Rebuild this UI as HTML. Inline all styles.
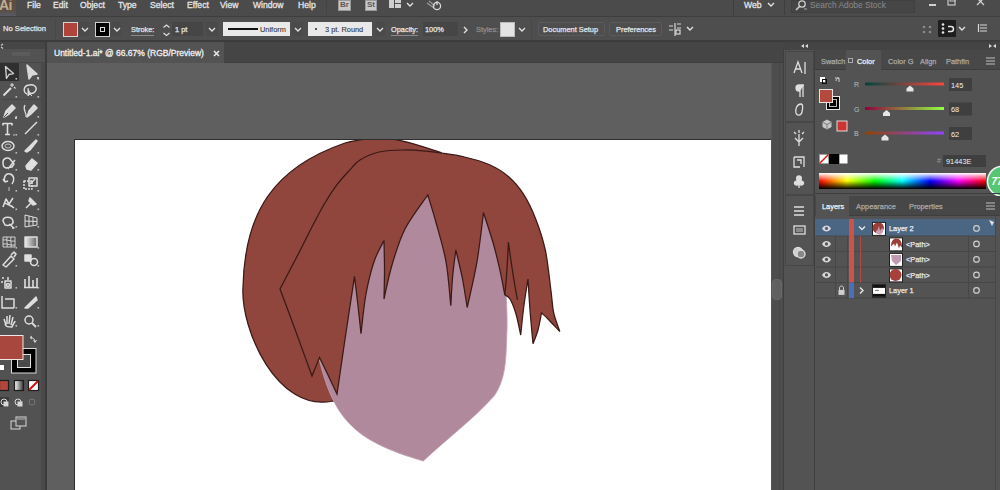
<!DOCTYPE html>
<html><head><meta charset="utf-8">
<style>
*{margin:0;padding:0;box-sizing:border-box}
html,body{width:1000px;height:490px;overflow:hidden;background:#535353;font-family:"Liberation Sans",sans-serif;color:#e6e6e6}
.a{position:absolute}
.m{position:absolute;top:0px;font-size:8.6px;line-height:10px;color:#e4e4e4;-webkit-text-stroke:0.3px #e4e4e4}
.t{position:absolute;font-size:7.4px;line-height:9px;color:#e6e6e6;white-space:nowrap;-webkit-text-stroke:0.25px currentColor}
.chev{position:absolute;width:10px;height:14px;background:#4a4a4a}
.box{position:absolute;background:#464646}
.ul{border-bottom:1px solid #8a8a8a}
svg{overflow:visible}
</style></head><body>

<!-- MENU BAR -->
<div class="a" style="left:0;top:0;width:1000px;height:17px;background:#4b4b4b;border-bottom:1px solid #3e3e3e">
  <div class="a" style="left:0;top:0;width:16px;height:16px;background:linear-gradient(#5d4c40,#5a5048 70%,#565a66)"></div>
  <div class="a" style="left:-1px;top:-3px;font-size:14px;line-height:16px;color:#c2ac8e;font-weight:bold;letter-spacing:-0.5px">Ai</div>
  <div class="m" style="left:27px">File</div>
  <div class="m" style="left:53px">Edit</div>
  <div class="m" style="left:80px">Object</div>
  <div class="m" style="left:118px">Type</div>
  <div class="m" style="left:150px">Select</div>
  <div class="m" style="left:187px">Effect</div>
  <div class="m" style="left:220px">View</div>
  <div class="m" style="left:253px">Window</div>
  <div class="m" style="left:298px">Help</div>
  <div class="a" style="left:326px;top:0;width:1px;height:15px;background:#444"></div>
  <div class="a" style="left:338px;top:0;width:13px;height:11px;background:#c9c9c9;border:1px solid #9a9a9a"></div>
  <div class="a" style="left:340px;top:0px;font-size:8px;line-height:10px;color:#5a5a5a;font-weight:bold">Br</div>
  <div class="a" style="left:365px;top:0;width:12px;height:11px;background:#c9c9c9;border:1px solid #9a9a9a"></div>
  <div class="a" style="left:367px;top:0px;font-size:8px;line-height:10px;color:#5a5a5a;font-weight:bold">St</div>
  <div class="a" style="left:389px;top:0;width:5px;height:8px;background:#cfcfcf"></div>
  <div class="a" style="left:395px;top:0;width:6px;height:3px;background:#cfcfcf"></div>
  <div class="a" style="left:395px;top:4px;width:6px;height:4px;background:#cfcfcf"></div>
  <svg class="a" style="left:406px;top:2px" width="8" height="6"><path d="M1,1 L4,4 L7,1" fill="none" stroke="#e0e0e0" stroke-width="1.4"/></svg>
  <svg class="a" style="left:425px;top:0px" width="18" height="12"><path d="M2,3 L9,8 M4,1 L10,6" stroke="#9a9a9a" stroke-width="1.2"/><circle cx="12" cy="6" r="3.6" fill="none" stroke="#d8d8d8" stroke-width="1.3"/><path d="M12,1 L12,5" stroke="#d8d8d8" stroke-width="1.3"/></svg>
  <div class="a" style="left:733px;top:0;width:1px;height:15px;background:#3e3e3e"></div>
  <div class="m" style="left:744px">Web</div>
  <svg class="a" style="left:767px;top:2px" width="8" height="6"><path d="M1,1 L4,4 L7,1" fill="none" stroke="#e0e0e0" stroke-width="1.4"/></svg>
  <div class="a" style="left:784px;top:0;width:1px;height:15px;background:#3e3e3e"></div>
  <div class="a" style="left:791px;top:0;width:124px;height:13px;background:#464646;border:1px solid #404040"></div>
  <svg class="a" style="left:794px;top:0px" width="14" height="12"><circle cx="8" cy="4" r="3.2" fill="none" stroke="#d0d0d0" stroke-width="1.3"/><path d="M6,6 L2,10" stroke="#d0d0d0" stroke-width="1.6"/><path d="M10,9 L13,9" stroke="#aaa" stroke-width="1"/></svg>
  <div class="a" style="left:810px;top:0px;font-size:8.4px;line-height:10px;color:#8a8a8a">Search Adobe Stock</div>
  <div class="a" style="left:929px;top:4px;width:7px;height:1.5px;background:#d0d0d0"></div>
  <svg class="a" style="left:947px;top:0px" width="9" height="7"><rect x="1" y="-2" width="7" height="7" fill="none" stroke="#c8c8c8" stroke-width="1.2"/><rect x="3" y="-4" width="5" height="5" fill="none" stroke="#c8c8c8" stroke-width="1"/></svg>
  <svg class="a" style="left:976px;top:0px" width="9" height="7"><path d="M1,-2 L8,5 M8,-2 L1,5" stroke="#cfcfcf" stroke-width="1.3"/></svg>
</div>

<!-- CONTROL BAR -->
<div class="a" style="left:0;top:17px;width:1000px;height:23px;background:#4e4e4e"><div class="a" style="left:0;top:0px;width:1000px;height:24px">
  <div class="t" style="left:3px;top:6.5px;font-size:7.6px">No Selection</div>
  <div class="a" style="left:55px;top:2px;width:1px;height:20px;background:#474747"></div>
  <!-- fill swatch -->
  <div class="a" style="left:63px;top:5px;width:15px;height:15px;background:#b0433a;border:1px solid #d5d5d5"></div>
  <div class="chev" style="left:79px;top:5px"></div>
  <svg class="a" style="left:81px;top:10px" width="8" height="6"><path d="M1,1 L4,4 L7,1" fill="none" stroke="#e0e0e0" stroke-width="1.4"/></svg>
  <div class="a" style="left:95px;top:5px;width:15px;height:15px;background:#000;border:1px solid #cfcfcf"></div>
  <div class="a" style="left:100px;top:10px;width:5px;height:5px;background:#000;border:1px solid #dcdcdc"></div>
  <div class="chev" style="left:111px;top:5px"></div>
  <svg class="a" style="left:113px;top:10px" width="8" height="6"><path d="M1,1 L4,4 L7,1" fill="none" stroke="#e0e0e0" stroke-width="1.4"/></svg>
  <div class="t ul" style="left:131px;top:8px;line-height:9px;padding-bottom:1px">Stroke:</div>
  <svg class="a" style="left:162px;top:6px" width="9" height="15"><path d="M1.5,4.5 L4.5,2 L7.5,4.5 M1.5,10 L4.5,12.5 L7.5,10" fill="none" stroke="#dcdcdc" stroke-width="1.3"/></svg>
  <div class="box" style="left:172px;top:5px;width:31px;height:14px"></div>
  <div class="t" style="left:175px;top:8px">1 pt</div>
  <div class="chev" style="left:206px;top:5px;width:12px"></div>
  <svg class="a" style="left:208px;top:10px" width="8" height="6"><path d="M1,1 L4,4 L7,1" fill="none" stroke="#e0e0e0" stroke-width="1.4"/></svg>
  <!-- profile -->
  <div class="a" style="left:223px;top:5px;width:67px;height:14px;background:#e9e9e9"></div>
  <div class="a" style="left:228px;top:11px;width:30px;height:2px;background:#111"></div>
  <div class="t" style="left:260px;top:8px;color:#333;-webkit-text-stroke:0.1px #333">Uniform</div>
  <div class="chev" style="left:292px;top:5px;width:11px"></div>
  <svg class="a" style="left:294px;top:10px" width="8" height="6"><path d="M1,1 L4,4 L7,1" fill="none" stroke="#e0e0e0" stroke-width="1.4"/></svg>
  <div class="a" style="left:308px;top:5px;width:64px;height:14px;background:#e9e9e9"></div>
  <div class="a" style="left:315px;top:11px;width:2px;height:2px;background:#222;border-radius:1px"></div>
  <div class="t" style="left:325px;top:8px;color:#333;-webkit-text-stroke:0.1px #333">3 pt. Round</div>
  <div class="chev" style="left:375px;top:5px;width:10px"></div>
  <svg class="a" style="left:376px;top:10px" width="8" height="6"><path d="M1,1 L4,4 L7,1" fill="none" stroke="#e0e0e0" stroke-width="1.4"/></svg>
  <div class="t ul" style="left:391px;top:8px;padding-bottom:1px">Opacity:</div>
  <div class="box" style="left:423px;top:5px;width:35px;height:14px"></div>
  <div class="t" style="left:425px;top:8px">100%</div>
  <svg class="a" style="left:463px;top:9px" width="6" height="8"><path d="M1,1 L4,4 L1,7" fill="none" stroke="#e0e0e0" stroke-width="1.4"/></svg>
  <div class="t" style="left:476px;top:8px;color:#8e8e8e">Styles:</div>
  <div class="a" style="left:500px;top:5px;width:15px;height:15px;background:#e4e4e4;border:1px solid #bdbdbd"></div>
  <svg class="a" style="left:518px;top:10px" width="8" height="6"><path d="M1,1 L4,4 L7,1" fill="none" stroke="#e0e0e0" stroke-width="1.4"/></svg>
  <div class="a" style="left:531px;top:2px;width:1px;height:20px;background:#474747"></div>
  <div class="a" style="left:538px;top:5px;width:67px;height:14px;border:1px solid #5a5a5a;border-radius:2px;background:#4e4e4e"></div>
  <div class="t" style="left:543px;top:8px">Document Setup</div>
  <div class="a" style="left:609px;top:5px;width:53px;height:14px;border:1px solid #5a5a5a;border-radius:2px;background:#4e4e4e"></div>
  <div class="t" style="left:616px;top:8px">Preferences</div>
  <svg class="a" style="left:668px;top:5px" width="14" height="15"><path d="M1,4 L5,4 M1,8 L5,8 M9,2 L13,2 M9,6 L13,6 M7,1 L7,14" stroke="#d8d8d8" stroke-width="1.2"/><rect x="8" y="8" width="4" height="4" fill="none" stroke="#d8d8d8" stroke-width="1.2"/></svg>
  <svg class="a" style="left:686px;top:9px" width="8" height="6"><path d="M1,1 L4,4 L7,1" fill="none" stroke="#e0e0e0" stroke-width="1.4"/></svg>
  <!-- right icons -->
  <svg class="a" style="left:921px;top:8px" width="13" height="9"><g fill="#8a8a8a"><circle cx="3" cy="2" r="1.3"/><circle cx="9" cy="2" r="1.3"/><circle cx="3" cy="7" r="1.3"/><circle cx="9" cy="7" r="1.3"/></g></svg>
  <div class="a" style="left:938px;top:3px;width:18px;height:17px;background:#1e1e1e;border-radius:1px"></div>
  <svg class="a" style="left:940px;top:5px" width="15" height="13"><g fill="#e6e6e6"><circle cx="3" cy="2.5" r="1.3"/><circle cx="3" cy="6.5" r="1.3"/><circle cx="3" cy="10.5" r="1.3"/></g><path d="M8,4.5 L11,4.5 A2.5,2.5 0 0 1 11,9.5 L8,9.5" fill="none" stroke="#e6e6e6" stroke-width="1.5"/></svg>
  <svg class="a" style="left:958px;top:9px" width="8" height="6"><path d="M1,1 L4,4 L7,1" fill="none" stroke="#e0e0e0" stroke-width="1.4"/></svg>
  <svg class="a" style="left:977px;top:6px" width="11" height="10"><path d="M1.5,1 L1.5,9 M3,2 L10,2 M3,5 L10,5 M3,8 L10,8" stroke="#d8d8d8" stroke-width="1.2"/></svg>
</div></div>
<div class="a" style="left:0;top:40px;width:1000px;height:2px;background:#3c3c3c"></div>

<!-- TOOLBAR -->
<div class="a" style="left:0;top:42px;width:45px;height:448px;background:#525252"></div>
<div class="a" style="left:41px;top:62px;width:4px;height:428px;background:#4a4a4a"></div>
<div class="a" style="left:45px;top:42px;width:2px;height:448px;background:#3c3c3c"></div>
<div class="a" style="left:0;top:42px;width:45px;height:7px;background:#464646"></div>
<div class="a" style="left:0;top:62px;width:44px;height:1px;background:#474747"></div>
<svg class="a" style="left:0;top:42px" width="45" height="448">
 <g fill="none" stroke="#dcdcdc" stroke-width="1.2">
  <path d="M1,3.5 L3,2 M1,5 L3,6.5" stroke="#ccc"/>
  <path d="M12,11 L30,11 M12,13 L30,13" stroke="#6a6a6a" stroke-width="0.8"/>
 </g>
</svg>
<div class="a" style="left:0;top:63px;width:19px;height:18px;background:#2f2f2f"></div>
<svg class="a" style="left:0;top:42px" width="45" height="448">
 <g fill="none" stroke="#dedede" stroke-width="1.5" stroke-linejoin="round">
  <!-- selection -->
  <path d="M5.5,24.5 L13.5,31.5 L9,32.5 L6.5,36.5 Z" stroke="#cfcfcf" stroke-width="1.4"/>
  <!-- direct selection -->
  <path d="M27,23 L37,32 L32,33 L29,37 Z" fill="#d8d8d8" stroke="#d8d8d8"/>
  <rect x="37" y="35" width="2" height="2" fill="#ccc" stroke="none"/>
  <!-- magic wand -->
  <path d="M3.5,53.5 L11,46" stroke-width="2"/><path d="M12,41 L12,45 M10,43 L14,43 M14,45 L15.5,46.5" stroke-width="1.1"/>
  <!-- lasso -->
  <path d="M27,52 C23,50 23,44 29,43 C34,42 37,45 36,48 C35,51 32,52 30,51" stroke-width="1.4"/><path d="M28,46 L28,54 L30,52 L32,54" fill="#d8d8d8" stroke-width="1"/>
  <!-- separator -->
  <path d="M2,57.5 L42,57.5" stroke="#474747" stroke-width="1"/>
  <!-- pen -->
  <path d="M4,75 L6,69 L12,63 L15,66 L9,72 Z" fill="#d8d8d8"/><path d="M4,75 L8,71" stroke="#4f4f4f" stroke-width="1"/>
  <rect x="15" y="75" width="2" height="2" fill="#ccc" stroke="none"/>
  <!-- curvature pen -->
  <path d="M25,63 C22,68 27,70 26,75" stroke-width="1.2"/><path d="M27,75 L29,69 L34,63 L37,66 L31,72 Z" fill="#d8d8d8"/>
  <!-- type -->
  <path d="M3,81.5 L12,81.5 M7.5,81 L7.5,92 M5,92.5 L10,92.5 M3,81 L3,83.5 M12,81 L12,83.5" stroke-width="1.6"/>
  <circle cx="14" cy="93" r="0.8" fill="#ccc" stroke="none"/>
  <!-- line -->
  <path d="M25,92 L37,80"/>
  <!-- ellipse -->
  <ellipse cx="8" cy="104" rx="6" ry="4.5"/>
  <ellipse cx="8" cy="104" rx="3" ry="2" stroke-width="0.8"/>
  <!-- paintbrush -->
  <path d="M25,109 L28,106 L36,98 L37,99 L30,108 L27,110 Z" fill="#e0e0e0"/>
  <!-- shaper -->
  <path d="M3,120 C3,116 8,115 10,117 L14,122 L12,125 L6,126 C3,125 3,123 3,120 Z M8,127 L15,118"/>
  <!-- eraser -->
  <path d="M26,124 L32,117 L37,121 L31,128 L27,127 Z" fill="#e0e0e0"/>
  <!-- rotate -->
  <path d="M5,140 C3,135 6,131 10,132 C14,133 15,138 12,142 M5,140 L3,137 M5,140 L8,139"/>
  <path d="M9,145 L9,149" stroke-width="0.8"/>
  <!-- scale -->
  <rect x="24" y="139" width="8" height="8" stroke-dasharray="2,1"/><rect x="29" y="136" width="8" height="8"/><path d="M30,142 L35,137"/>
  <!-- width -->
  <path d="M3,165 L6,157 L9,162 L13,156 M5,161 C8,163 11,163 14,166" />
  <!-- puppet pin -->
  <path d="M26,166 L31,161 M30,156 L36,162 L33,163 L29,159 Z" fill="#e0e0e0"/>
  <!-- shape builder -->
  <path d="M3,179 C3,174 12,174 13,179 C14,183 8,184 5,183 Z M9,182 L14,186 L12,186" />
  <!-- perspective -->
  <path d="M25,173 L37,176 L37,183 L25,185 Z M29,174 L29,184 M33,175 L33,183 M25,179 L37,179.5" stroke-width="1"/>
  <!-- mesh -->
  <path d="M3,195 L15,195 L15,205 L3,205 Z M3,198 C8,197 10,200 15,199 M3,202 C8,201 10,204 15,203 M7,195 C6,199 8,202 7,205 M11,195 C10,199 12,202 11,205" stroke-width="0.9"/>
  <!-- gradient -->
  <rect x="25" y="195" width="12" height="10" fill="url(#grd)"/>
  <!-- eyedropper -->
  <path d="M3,223 L11,214 L14,217 L6,225 Z M11,213 L14,210 L16,212 L14,215" />
  <!-- blend -->
  <path d="M25,213 L31,213 L31,219 L25,219 Z" fill="#e0e0e0"/><circle cx="34" cy="220" r="3.5"/>
  <!-- symbol sprayer -->
  <path d="M8,235 L8,238 M5,239 L11,239 L11,246 L5,246 Z M2,236 L4,236 M2,239 L2,241" /><circle cx="8" cy="243" r="1.5"/>
  <!-- column graph -->
  <path d="M25,245 L25,237 M29,245 L29,234 M33,245 L33,238 M37,245 L37,236 M24,245.5 L38,245.5" stroke-width="1.6"/>
  <!-- artboard -->
  <path d="M2,254 L2,266 L14,266 M5,257 L14,257 L14,266" />
  <!-- slice -->
  <path d="M25,266 L36,255 L37,258 L28,266 Z" fill="#e0e0e0"/>
  <!-- hand -->
  <path d="M6,283 L4,277 M7,282 L7,274 M9,282 L10,273 M11,283 L13,275 M5,282 C6,285 8,285 12,285 C13,282 15,280 15,279" stroke-width="1.5"/>
  <!-- zoom -->
  <circle cx="29" cy="278" r="4"/><path d="M32,281 L36,285" stroke-width="1.8"/>
 </g>
 <defs><linearGradient id="grd"><stop offset="0" stop-color="#eee"/><stop offset="1" stop-color="#666"/></linearGradient></defs>
 <!-- fill / stroke -->
 <rect x="11.5" y="306.5" width="24.5" height="24.5" fill="#000" stroke="#d8d8d8" stroke-width="1"/>
 <rect x="17.5" y="312.5" width="13" height="13" fill="#4a4a4a" stroke="#e0e0e0" stroke-width="1"/>
 <rect x="-0.5" y="293.5" width="23.5" height="24" fill="#a8473d" stroke="#f0e4e4" stroke-width="1"/>
 <path d="M30,295.5 C33,295.5 35,297 35,300 M33.5,298 L35,300.5 L36.5,298 M32,294 L30,295.5 L32,297" fill="none" stroke="#d8d8d8" stroke-width="1"/>
 <path d="M0,323 L4,323 L4,328 L0,328 Z" fill="#fff"/>
 <!-- mode buttons -->
 <rect x="-0.5" y="338.5" width="9" height="10" fill="#b2463c" stroke="#1e1e1e" stroke-width="1.2"/>
 <rect x="14.5" y="338.5" width="9" height="10" fill="url(#grd2)" stroke="#1e1e1e" stroke-width="1.2"/>
 <rect x="28.5" y="338.5" width="10" height="10" fill="#fff" stroke="#1e1e1e" stroke-width="1.2"/>
 <path d="M29,348 L38,339" stroke="#d21010" stroke-width="2"/>
 <defs><linearGradient id="grd2"><stop offset="0" stop-color="#fff"/><stop offset="1" stop-color="#333"/></linearGradient></defs>
 <!-- draw modes -->
 <rect x="0" y="355" width="9" height="10" fill="#3a3a3a"/>
 <g fill="none" stroke="#d8d8d8" stroke-width="1">
  <circle cx="4" cy="360" r="3"/><rect x="4" y="360" width="4" height="4" fill="#d8d8d8"/>
  <circle cx="18" cy="360" r="3"/><rect x="18" y="360" width="4" height="4" fill="#d8d8d8"/>
  <circle cx="32" cy="360" r="3" stroke="#777"/>
  <rect x="11" y="379" width="9" height="8"/><rect x="16" y="375" width="10" height="9" fill="#535353"/>
  <path d="M17,377 L25,377" stroke-width="0.8"/>
 </g>
</svg>

<svg class="a" style="left:0;top:0" width="45" height="490"><g fill="#bdbdbd"><rect x="15.5" y="78" width="1.6" height="1.6"/><rect x="37.5" y="78" width="1.6" height="1.6"/><rect x="15.5" y="96" width="1.6" height="1.6"/><rect x="37.5" y="96" width="1.6" height="1.6"/><rect x="15.5" y="116" width="1.6" height="1.6"/><rect x="37.5" y="116" width="1.6" height="1.6"/><rect x="15.5" y="134" width="1.6" height="1.6"/><rect x="37.5" y="134" width="1.6" height="1.6"/><rect x="15.5" y="152" width="1.6" height="1.6"/><rect x="37.5" y="152" width="1.6" height="1.6"/><rect x="15.5" y="169" width="1.6" height="1.6"/><rect x="37.5" y="169" width="1.6" height="1.6"/><rect x="15.5" y="190" width="1.6" height="1.6"/><rect x="37.5" y="190" width="1.6" height="1.6"/><rect x="15.5" y="208.5" width="1.6" height="1.6"/><rect x="37.5" y="208.5" width="1.6" height="1.6"/><rect x="15.5" y="226" width="1.6" height="1.6"/><rect x="37.5" y="226" width="1.6" height="1.6"/><rect x="15.5" y="247" width="1.6" height="1.6"/><rect x="37.5" y="247" width="1.6" height="1.6"/><rect x="15.5" y="265" width="1.6" height="1.6"/><rect x="37.5" y="265" width="1.6" height="1.6"/><rect x="15.5" y="287" width="1.6" height="1.6"/><rect x="37.5" y="287" width="1.6" height="1.6"/><rect x="15.5" y="307" width="1.6" height="1.6"/><rect x="37.5" y="307" width="1.6" height="1.6"/><rect x="15.5" y="325" width="1.6" height="1.6"/><rect x="37.5" y="325" width="1.6" height="1.6"/></g></svg>
<!-- TAB STRIP -->
<div class="a" style="left:47px;top:42px;width:736px;height:21px;background:#454545;border-bottom:1px solid #3e3e3e"></div>
<div class="a" style="left:47px;top:42px;width:177px;height:21px;background:#535353"></div>
<div class="a" style="left:54px;top:48px;font-size:8.5px;line-height:10px;color:#f0f0f0;white-space:nowrap;-webkit-text-stroke:0.3px #f0f0f0">Untitled-1.ai* @ 66.67% (RGB/Preview)</div>
<svg class="a" style="left:213px;top:50px" width="8" height="8"><path d="M1,1 L6,6 M6,1 L1,6" stroke="#e8e8e8" stroke-width="1.6"/></svg>

<!-- CANVAS -->
<div class="a" style="left:47px;top:63px;width:724px;height:427px;background:#5f5f5f"></div>
<div class="a" style="left:74px;top:139px;width:697px;height:351px;background:#2e2e2e"></div>
<div class="a" style="left:75px;top:140px;width:696px;height:350px;background:#ffffff"></div>
<svg class="a" style="left:0;top:0" width="1000" height="490" viewBox="0 0 1000 490">
<defs><clipPath id="ab"><rect x="75" y="140" width="695" height="350"/></clipPath></defs>
<g clip-path="url(#ab)">
<path d="M333,401 C277.2,413.4 240.3,329.0 243.0,287.0 C244.7,212.3 273.4,167.7 345.0,143.0 C385.5,132.6 403.1,140.3 441.0,152.5 L500,200 L505,330 L480,400 Z" fill="#90453d" stroke="#3a1a17" stroke-width="1.25"/>
<path d="M317,350 C332.3,418.7 352.6,440.4 423.3,461.0 C446.6,438.9 473.1,419.6 494.3,395.7 C507.6,376.7 505.8,351.8 507.0,330.0 C508,280 500,220 470,200 C440,185 400,200 370,240 C340,270 318,310 317,350 Z" fill="#b08a9c" stroke="#c0a0b0" stroke-width="0.8"/>
<path d="M280.0,289.0 C283.4,282.5 294.9,260.6 300.4,250.0 C305.8,239.4 308.6,233.3 312.7,225.5 C316.8,217.7 320.8,209.8 324.9,203.0 C328.9,196.2 332.9,190.1 337.0,184.7 C341.1,179.3 345.6,174.5 349.4,170.4 C353.2,166.3 354.7,163.3 359.6,160.2 C364.5,157.1 371.7,153.7 379.0,152.0 C386.3,150.3 395.3,150.1 403.5,150.0 C411.7,149.9 421.8,150.8 428.0,151.3 C434.2,151.8 434.9,152.1 441.0,153.0 C447.1,153.9 456.5,155.1 464.5,157.0 C472.5,158.9 481.6,161.2 489.0,164.5 C496.4,167.8 502.9,171.8 508.6,176.7 C514.3,181.6 518.8,186.9 523.3,193.9 C527.8,200.9 531.8,209.1 535.5,218.4 C539.2,227.8 542.7,237.9 545.3,250.0 C547.9,262.1 549.6,280.5 551.0,291.0 C552.4,301.5 552.2,306.2 553.7,313.0 C555.2,319.8 558.8,328.4 559.8,331.5 C557.8,329.4 551.0,322.1 548.0,319.0 C545.0,315.9 542.6,314.0 541.5,313.0 C540.9,315.8 539.4,324.9 538.0,330.0 C536.6,335.1 533.8,341.4 533.0,343.7 C532.5,338.1 530.8,320.8 530.0,310.0 C529.2,299.2 528.3,284.2 528.0,279.0 C527.3,283.3 525.2,295.7 524.0,305.0 C522.8,314.3 521.2,330.0 520.7,335.0 C519.9,331.5 517.8,320.0 516.0,314.0 C514.2,308.0 511.9,302.2 510.0,299.0 C508.1,295.8 505.7,295.5 504.8,294.8 C503.9,290.4 501.6,277.3 499.6,268.6 C497.6,259.9 495.7,251.8 493.0,242.5 C490.3,233.2 485.1,217.7 483.5,212.7 C482.4,220.9 479.7,245.9 477.0,261.7 C474.3,277.5 468.8,299.9 467.2,307.5 C466.4,302.6 464.2,287.6 462.3,278.0 C460.4,268.4 456.9,254.7 455.8,250.0 C455.2,254.7 453.3,268.7 452.5,278.0 C451.7,287.3 451.1,301.2 450.8,305.8 C450.0,298.4 448.5,275.6 446.0,261.7 C443.5,247.8 439.0,233.6 436.0,222.5 C433.0,211.4 429.2,199.6 427.8,195.0 C424.0,200.7 411.0,217.3 405.0,229.0 C399.0,240.7 395.5,253.3 392.0,265.0 C388.5,276.7 385.3,293.3 384.0,299.0 C384.1,294.2 384.5,279.8 384.5,270.0 C384.5,260.2 384.1,245.4 384.0,240.5 C382.3,244.0 377.0,252.8 374.0,261.7 C371.0,270.6 368.2,282.0 366.0,294.0 C363.8,306.0 361.8,327.0 361.0,333.6 C360.5,328.7 358.9,313.5 357.8,304.0 C356.7,294.5 355.1,281.0 354.5,276.4 C352.9,287.0 347.8,320.4 344.9,340.0 C342.0,359.6 338.3,385.0 337.0,394.0 C335.5,390.8 330.9,381.1 328.0,375.0 C325.1,368.9 320.9,360.4 319.5,357.5 C318.2,360.6 313.2,372.9 312.0,376.0 C309.3,368.7 301.3,346.5 296.0,332.0 C290.7,317.5 282.7,296.2 280.0,289.0 Z" fill="#90453d" stroke="#3a1a17" stroke-width="1.25" stroke-linejoin="miter"/>
<path d="M508.4,242 C507.5,262 506.5,280 504.8,294.8 M508.4,242 C511,262 514,282 517.5,300" fill="none" stroke="#3a1a17" stroke-width="1.25"/>
</g></svg>
<!-- scrollbar -->
<div class="a" style="left:771px;top:63px;width:12px;height:427px;background:#4d4d4d;border-left:1px solid #555"></div>
<div class="a" style="left:779px;top:63px;width:1px;height:427px;background:#474747"></div>
<div class="a" style="left:772px;top:279px;width:10px;height:21px;background:#606060;border:1px solid #686868;border-radius:4px"></div>

<!-- DOCK -->
<div class="a" style="left:783px;top:42px;width:32px;height:448px;background:#535353;border-left:1px solid #3e3e3e;border-right:1px solid #3e3e3e"></div>
<div class="a" style="left:783px;top:42px;width:32px;height:8px;background:#444"></div>
<svg class="a" style="left:783px;top:42px" width="32" height="448">
 <path d="M21,2 L18,4 L21,6 Z M25,2 L22,4 L25,6 Z" fill="#d8d8d8"/>
 <rect x="2.5" y="9.5" width="28" height="70" fill="none" stroke="#474747"/>
 <rect x="2.5" y="80.5" width="28" height="72" fill="none" stroke="#474747"/>
 <rect x="2.5" y="153.5" width="28" height="70" fill="none" stroke="#474747"/>
 <g fill="none" stroke="#dedede" stroke-width="1.3">
  <path d="M11,31 L15,20 L19,31 M12.5,27 L17.5,27 M22,20 L22,32" />
  <path d="M17,43 L17,55 M20,43 L20,55 M21,43 L16,43 C12,43 12,49 16,49 L17,49" fill="#dedede"/>
  <path d="M18,62 C14,62 12,67 13,71 C14,74 18,74 19,70 C20,66 20,62 18,62 Z"/>
  <path d="M16,92 L16,104 M12,96 L16,100 L20,96 M13,92 L11,90 M19,92 L21,90 M16,91 L16,88" />
  <path d="M11,115 L21,115 L21,125 M11,115 L11,125 L17,125 M14,118 L18,118 L18,122"/>
  <path d="M16,134 C13,134 13,138 15,139 C11,138 10,143 14,143 L16,142 L16,146 M16,142 L18,143 C22,143 21,138 17,139 C19,138 19,134 16,134 Z" fill="#dedede"/>
  <path d="M11,165 L21,165 M11,169 L21,169 M11,173 L21,173" stroke-width="1.6"/>
  <rect x="11" y="184" width="11" height="8"/><path d="M13,187 L20,187 M13,189 L20,189" stroke-width="0.8"/>
  <circle cx="15" cy="210" r="4.5" fill="#cfcfcf"/><circle cx="18" cy="212" r="4" fill="#888"/>
 </g>
</svg>

<!-- PANEL -->
<div class="a" style="left:815px;top:42px;width:185px;height:448px;background:#535353"></div>
<div class="a" style="left:815px;top:42px;width:185px;height:8px;background:#444"></div>
<svg class="a" style="left:988px;top:43px" width="10" height="7"><path d="M1,1 L4,3 L1,5 Z M8,1 L5,3 L8,5 Z" fill="#d8d8d8"/></svg>
<!-- color tabs -->
<div class="a" style="left:815px;top:50px;width:185px;height:20px;background:#484848;border-bottom:1px solid #3e3e3e"></div>
<div class="a" style="left:846px;top:50px;width:35px;height:20px;background:#535353"></div>
<div class="t" style="left:821px;top:57px;color:#a8a8a8">Swatch</div>
<div class="a" style="left:848px;top:58px;width:5px;height:5px;border:1px solid #aaa"></div>
<div class="t" style="left:857px;top:57px;color:#f2f2f2">Color</div>
<div class="t" style="left:888px;top:57px;color:#a8a8a8">Color G</div>
<div class="t" style="left:920px;top:57px;color:#a8a8a8">Align</div>
<div class="t" style="left:946px;top:57px;color:#a8a8a8">Pathfin</div>
<svg class="a" style="left:985px;top:57px" width="11" height="8"><path d="M1,1 L10,1 M1,4 L10,4 M1,7 L10,7" stroke="#bdbdbd" stroke-width="1.2"/></svg>
<!-- color panel content -->
<svg class="a" style="left:815px;top:70px" width="185" height="125">
 <defs>
  <linearGradient id="gr"><stop offset="0" stop-color="rgb(0,68,62)"/><stop offset="1" stop-color="rgb(255,68,62)"/></linearGradient>
  <linearGradient id="gg"><stop offset="0" stop-color="rgb(145,0,62)"/><stop offset="1" stop-color="rgb(145,255,62)"/></linearGradient>
  <linearGradient id="gb"><stop offset="0" stop-color="rgb(145,68,0)"/><stop offset="1" stop-color="rgb(145,68,255)"/></linearGradient>
  <linearGradient id="hue">
   <stop offset="0" stop-color="#ff0000"/><stop offset="0.1667" stop-color="#ffff00"/><stop offset="0.3333" stop-color="#00ff00"/><stop offset="0.5" stop-color="#00ffff"/><stop offset="0.6667" stop-color="#0000ff"/><stop offset="0.8333" stop-color="#ff00ff"/><stop offset="1" stop-color="#ff0000"/>
  </linearGradient>
  <linearGradient id="wb" x1="0" y1="0" x2="0" y2="1"><stop offset="0" stop-color="#fff" stop-opacity="1"/><stop offset="0.5" stop-color="#fff" stop-opacity="0"/><stop offset="0.5" stop-color="#000" stop-opacity="0"/><stop offset="1" stop-color="#000" stop-opacity="1"/></linearGradient>
 </defs>
 <!-- mini default icon -->
 <rect x="5" y="7" width="5" height="5" fill="#fff"/><rect x="7.5" y="9.5" width="4" height="4" fill="none" stroke="#111" stroke-width="1"/>
 <path d="M20,8 L24,8 L24,12 M21,11 C21,9 22,8 24,8" fill="none" stroke="#cfcfcf" stroke-width="1"/>
 <rect x="11.5" y="26.5" width="13" height="13" fill="#000" stroke="#e8e8e8"/>
 <rect x="14.5" y="29.5" width="7" height="7" fill="#000" stroke="#e8e8e8" stroke-width="0.8"/>
 <rect x="4.5" y="19.5" width="13" height="13" fill="#b44a3b" stroke="#e8e0e0"/>
 <path d="M7.5,52 L12,49.5 L16.5,52 L16.5,57 L12,59.5 L7.5,57 Z" fill="#c8c8c8"/><path d="M8,52.5 L12,54.5 L16,52.5 M12,54.5 L12,59" fill="none" stroke="#666" stroke-width="0.8"/>
 <rect x="22" y="51" width="10" height="10" fill="#cc3333" stroke="#e8e8e8" stroke-width="0.9"/>
 <text x="39" y="17" font-size="7" fill="#bdbdbd" font-family="Liberation Sans">R</text>
 <text x="39" y="42" font-size="7" fill="#bdbdbd" font-family="Liberation Sans">G</text>
 <text x="39" y="66" font-size="7" fill="#bdbdbd" font-family="Liberation Sans">B</text>
 <rect x="50" y="12.5" width="79" height="3" fill="url(#gr)"/>
 <rect x="50" y="37" width="79" height="3" fill="url(#gg)"/>
 <rect x="50" y="61.5" width="79" height="3" fill="url(#gb)"/>
 <path d="M91.5,21.5 L91.5,18.5 L95,15.5 L98.5,18.5 L98.5,21.5 Z" fill="#e6e6e6"/>
 <path d="M68.0,46 L68.0,43 L71.5,40 L75.0,43 L75.0,46 Z" fill="#e6e6e6"/>
 <path d="M66.5,70.5 L66.5,67.5 L70,64.5 L73.5,67.5 L73.5,70.5 Z" fill="#e6e6e6"/>
 <rect x="134" y="8" width="23" height="13" fill="#3f3f3f"/>
 <rect x="134" y="32.5" width="23" height="13" fill="#3f3f3f"/>
 <rect x="134" y="57" width="23" height="13" fill="#3f3f3f"/>
 <text x="136" y="17.5" font-size="7.4" fill="#f0f0f0" font-family="Liberation Sans">145</text>
 <text x="136" y="42" font-size="7.4" fill="#f0f0f0" font-family="Liberation Sans">68</text>
 <text x="136" y="66.5" font-size="7.4" fill="#f0f0f0" font-family="Liberation Sans">62</text>
 <!-- none/black/white -->
 <rect x="4.5" y="84.5" width="9" height="9" fill="#fff" stroke="#999" stroke-width="0.6"/><path d="M4.5,93.5 L13.5,84.5" stroke="#d01818" stroke-width="1.5"/>
 <rect x="14" y="84" width="10" height="10" fill="#000"/>
 <rect x="24.5" y="84.5" width="8" height="9" fill="#fff"/>
 <text x="122" y="93" font-size="7" fill="#9a9a9a" font-family="Liberation Sans">#</text>
 <rect x="128" y="85" width="43" height="12" fill="#3f3f3f"/>
 <text x="131" y="94" font-size="7.4" fill="#f0f0f0" font-family="Liberation Sans">91443E</text>
 <rect x="4" y="103" width="167" height="16" fill="url(#hue)"/>
 <rect x="4" y="103" width="167" height="16" fill="url(#wb)"/>
</svg>
<!-- green badge -->
<svg class="a" style="left:984px;top:163px" width="16" height="36"><circle cx="18.5" cy="18.2" r="15.8" fill="#eef5ee"/><circle cx="18.5" cy="18.2" r="14.2" fill="#56c672"/><text x="7.5" y="22" font-size="10" fill="#f4fff4" font-family="Liberation Sans" font-weight="bold" font-style="italic">77</text></svg>

<!-- LAYERS -->
<div class="a" style="left:815px;top:193px;width:185px;height:1px;background:#3e3e3e"></div>
<div class="a" style="left:815px;top:196px;width:185px;height:20px;background:#474747;border-bottom:1px solid #3e3e3e"></div>
<div class="a" style="left:816px;top:196px;width:33px;height:20px;background:#535353"></div>
<div class="t" style="left:822px;top:202px;color:#f2f2f2">Layers</div>
<div class="t" style="left:856px;top:202px;color:#a8a8a8">Appearance</div>
<div class="t" style="left:909px;top:202px;color:#a8a8a8">Properties</div>
<svg class="a" style="left:985px;top:202px" width="11" height="8"><path d="M1,1 L10,1 M1,4 L10,4 M1,7 L10,7" stroke="#bdbdbd" stroke-width="1.2"/></svg>
<div class="a" style="left:815px;top:219px;width:181px;height:17.0px;background:#4a6683"></div>
<svg class="a" style="left:815px;top:0px;overflow:visible" width="185" height="490">
 <g stroke="#474747" stroke-width="1"><path d="M1,236.0 L180,236.0 M1,251.5 L180,251.5 M1,267.0 L180,267.0 M1,282.5 L180,282.5 M1,298.0 L180,298.0"/><path d="M20.5,236.0 L20.5,298.0 M32.5,236.0 L32.5,298.0 M153.5,236.0 L153.5,298.0"/></g>
 <path d="M180.5,220 L180.5,490" stroke="#474747"/>
 <rect x="34" y="219" width="5" height="63.5" fill="#cc524c"/>
 <rect x="34" y="282.5" width="5" height="15.5" fill="#4d6fb8"/>
 <rect x="45" y="236.0" width="1" height="46.5" fill="#b04a46"/>
 <path d="M7,228.4 C9,224.4 14,224.4 16,228.4 C14,232.4 9,232.4 7,228.4 Z" fill="#d8d8d8"/><circle cx="11.5" cy="228.4" r="1.6" fill="#4a6683"/>
 <path d="M7,243.9 C9,239.9 14,239.9 16,243.9 C14,247.9 9,247.9 7,243.9 Z" fill="#d8d8d8"/><circle cx="11.5" cy="243.9" r="1.6" fill="#535353"/>
 <path d="M7,259.4 C9,255.4 14,255.4 16,259.4 C14,263.4 9,263.4 7,259.4 Z" fill="#d8d8d8"/><circle cx="11.5" cy="259.4" r="1.6" fill="#535353"/>
 <path d="M7,274.9 C9,270.9 14,270.9 16,274.9 C14,278.9 9,278.9 7,274.9 Z" fill="#d8d8d8"/><circle cx="11.5" cy="274.9" r="1.6" fill="#535353"/>
 <rect x="23.5" y="289.9" width="6" height="5" fill="#d0d0d0"/><path d="M24.5,289.9 L24.5,287.9 C24.5,285.4 28.5,285.4 28.5,287.9 L28.5,289.9" fill="none" stroke="#d0d0d0"/>
 <path d="M44,226.4 L47,229.4 L50,226.4" fill="none" stroke="#e8e8e8" stroke-width="1.4"/>
 <path d="M45,287.4 L48,290.4 L45,293.4" fill="none" stroke="#e8e8e8" stroke-width="1.4"/>
 <g transform="translate(57,221.9)"><rect x="0.5" y="0.5" width="13" height="13" fill="#fff" stroke="#222"/><circle cx="6" cy="6" r="5.5" fill="#9b3f3a"/><path d="M4,6 L7,3 L11,5 L11,10 L8,13 L4,11 Z" fill="#c7a0b4"/><path d="M2,7 C3,2 6,1 8,1 C11,1 12,4 12,8 L10,6 L8,9 L7,4 L5,9 Z" fill="#9b3f3a"/></g>
 <g transform="translate(74,237.4)"><rect x="0.5" y="0.5" width="13" height="13" fill="#fff" stroke="#222"/><path d="M2,9 C2,3 5,1 7,1 C11,1 13,4 13,10 L11,8 L10,11 L8,5 L6,9 L5,6 Z" fill="#9b3f3a"/></g>
 <g transform="translate(74,252.9)"><rect x="0.5" y="0.5" width="13" height="13" fill="#fff" stroke="#222"/><path d="M2,2 L12,2 L12,8 L7,12 L3,8 Z" fill="#c09ab0"/></g>
 <g transform="translate(74,268.4)"><rect x="0.5" y="0.5" width="13" height="13" fill="#fff" stroke="#222"/><circle cx="6.5" cy="6.5" r="6" fill="#a8403a"/></g>
 <g transform="translate(57,283.9)"><rect x="0.5" y="0.5" width="13" height="13" fill="#fff" stroke="#222"/><rect x="1" y="1" width="12" height="3" fill="#111"/><rect x="1" y="10" width="12" height="3" fill="#111"/><rect x="3" y="6" width="4" height="1" fill="#777"/></g>
 <g fill="none" stroke="#cfcfcf" stroke-width="1.2"><circle cx="161.5" cy="228.4" r="2.8"/><circle cx="161.5" cy="243.9" r="2.8"/><circle cx="161.5" cy="259.4" r="2.8"/><circle cx="161.5" cy="274.9" r="2.8"/><circle cx="161.5" cy="290.4" r="2.8"/></g>
 <path d="M174,220 L179,222 L177,226" fill="#e0e0e0"/>
</svg>
<div class="t" style="left:889px;top:224.2px;color:#e8f0ff">Layer 2</div>
<div class="t" style="left:906px;top:239.8px;">&lt;Path&gt;</div>
<div class="t" style="left:906px;top:255.2px;">&lt;Path&gt;</div>
<div class="t" style="left:906px;top:270.8px;">&lt;Path&gt;</div>
<div class="t" style="left:889px;top:286.2px;">Layer 1</div>
<div class="a" style="left:995px;top:216px;width:1px;height:274px;background:#474747"></div>
</body></html>
